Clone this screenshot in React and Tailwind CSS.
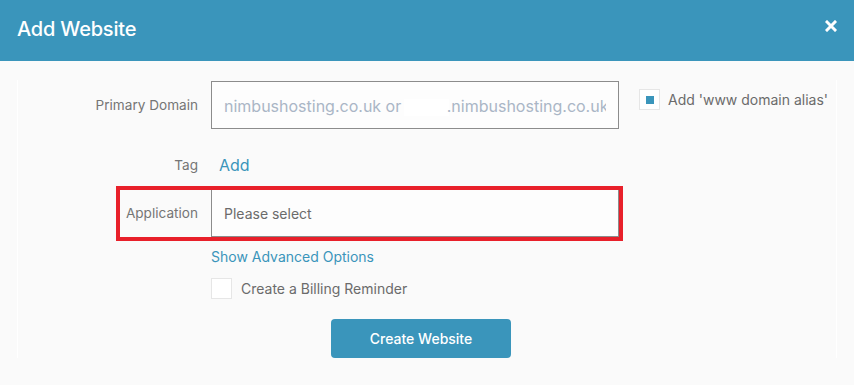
import React from 'react';

const font = { fontFamily: 'Inter, "Noto Sans", sans-serif' };

export default function App() {
  return (
    <div className="w-[854px] h-[385px] bg-[#fafafa] overflow-hidden" style={font}>
      {/* header */}
      <div className="h-[61px] bg-[#3a95bb] flex items-center justify-between pl-[17px] pr-[17px]">
        <h1 className="text-[20px] text-white font-medium tracking-[-0.2px] pb-[4px]">Add Website</h1>
        <svg width="12" height="12" viewBox="0 0 12 12" className="mb-[10px]">
          <path d="M2 2 L10 10 M10 2 L2 10" stroke="white" strokeWidth="3" strokeLinecap="square" />
        </svg>
      </div>

      {/* panel */}
      <div className="mx-[17px] mt-[19px] border-x border-white pt-px h-[278px] flex flex-col">
        {/* primary domain */}
        <div className="flex h-[48px]">
          <div className="w-[180px] flex items-center justify-end text-[13.6px] text-[#757575]">Primary Domain</div>
          <div className="ml-[13px] w-[408px] h-[48px] border border-[#8c8c8c] bg-[#fdfdfd] flex items-center pl-[12px] pr-[12px] overflow-hidden">
            <div className="whitespace-nowrap text-[16px] text-[#aab6c6] overflow-hidden pt-[1px]">
              nimbushosting.co.uk or <span className="inline-block w-[45px] h-[17px] bg-white align-middle -ml-[2px] -mr-[2px]"></span>.nimbushosting.co.uk
            </div>
          </div>
          <label className="ml-[20px] mt-[8px] flex items-start gap-[8px]">
            <span className="w-[21px] h-[21px] border border-[#e6e6e6] bg-white flex items-center justify-center">
              <span className="w-[8px] h-[8px] bg-[#3a95bb]"></span>
            </span>
            <span className="text-[14px] text-[#6b6b6b] leading-[21px]">Add 'www domain alias'</span>
          </label>
        </div>

        {/* tag */}
        <div className="flex h-[48px] mt-[12px]">
          <div className="w-[180px] flex items-center justify-end text-[13.6px] text-[#757575]">Tag</div>
          <div className="ml-[21px] flex items-center text-[16px] text-[#3a95bb]">Add</div>
        </div>

        {/* application */}
        <div className="relative flex h-[48px]">
          <div className="w-[180px] flex items-center justify-end text-[13.6px] text-[#757575]">Application</div>
          <div className="ml-[13px] w-[408px] h-[48px] border border-[#8c8c8c] bg-[#fdfdfd] flex items-center pl-[12px] text-[14px] text-[#6b6b6b]">
            Please select
          </div>
          <div className="absolute left-[98px] top-[-3px] w-[507px] h-[55px] border-[4px] border-[#e8202a] pointer-events-none"></div>
        </div>

        {/* advanced */}
        <div className="ml-[193px] mt-[9px] h-[20px] flex items-center text-[14px] text-[#3a95bb]">Show Advanced Options</div>

        {/* billing reminder */}
        <label className="ml-[193px] mt-[12px] flex items-center gap-[9px]">
          <span className="w-[21px] h-[21px] border border-[#e6e6e6] bg-white"></span>
          <span className="text-[14px] text-[#6b6b6b]">Create a Billing Reminder</span>
        </label>

        {/* submit */}
        <button className="ml-[313px] mt-[20px] w-[180px] h-[39px] rounded-[4px] bg-[#3a95bb] text-white text-[14px] font-medium">
          Create Website
        </button>
      </div>
    </div>
  );
}
